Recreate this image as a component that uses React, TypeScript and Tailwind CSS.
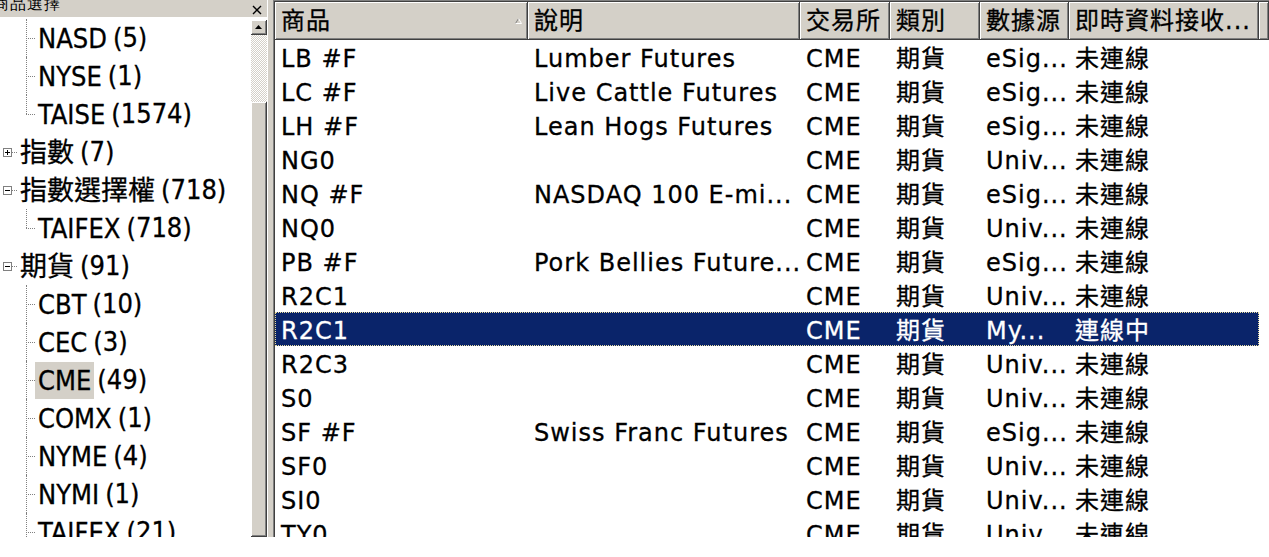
import React from 'react';

type TreeRow = {
  level: 1 | 2;
  label: string;
  count: string;
  box?: '+' | '-';
  last?: boolean;
  selected?: boolean;
};

const treeRows: TreeRow[] = [
  { level: 2, label: 'NASD', count: '(5)' },
  { level: 2, label: 'NYSE', count: '(1)' },
  { level: 2, label: 'TAISE', count: '(1574)', last: true },
  { level: 1, label: '指數', count: '(7)', box: '+' },
  { level: 1, label: '指數選擇權', count: '(718)', box: '-' },
  { level: 2, label: 'TAIFEX', count: '(718)', last: true },
  { level: 1, label: '期貨', count: '(91)', box: '-' },
  { level: 2, label: 'CBT', count: '(10)' },
  { level: 2, label: 'CEC', count: '(3)' },
  { level: 2, label: 'CME', count: '(49)', selected: true },
  { level: 2, label: 'COMX', count: '(1)' },
  { level: 2, label: 'NYME', count: '(4)' },
  { level: 2, label: 'NYMI', count: '(1)' },
  { level: 2, label: 'TAIFEX', count: '(21)' },
];

// column widths of the list view
const colClass = ['w-[253px]', 'w-[272px]', 'w-[90px]', 'w-[90px]', 'w-[89px]', 'w-[190px]'];
const headers = ['商品', '說明', '交易所', '類別', '數據源', '即時資料接收...'];

type Quote = { sym: string; desc: string; src: string; status: string; selected?: boolean };

const quotes: Quote[] = [
  { sym: 'LB #F', desc: 'Lumber Futures', src: 'eSig...', status: '未連線' },
  { sym: 'LC #F', desc: 'Live Cattle Futures', src: 'eSig...', status: '未連線' },
  { sym: 'LH #F', desc: 'Lean Hogs Futures', src: 'eSig...', status: '未連線' },
  { sym: 'NG0', desc: '', src: 'Univ...', status: '未連線' },
  { sym: 'NQ #F', desc: 'NASDAQ 100 E-mi...', src: 'eSig...', status: '未連線' },
  { sym: 'NQ0', desc: '', src: 'Univ...', status: '未連線' },
  { sym: 'PB #F', desc: 'Pork Bellies Future...', src: 'eSig...', status: '未連線' },
  { sym: 'R2C1', desc: '', src: 'Univ...', status: '未連線' },
  { sym: 'R2C1', desc: '', src: 'My...', status: '連線中', selected: true },
  { sym: 'R2C3', desc: '', src: 'Univ...', status: '未連線' },
  { sym: 'S0', desc: '', src: 'Univ...', status: '未連線' },
  { sym: 'SF #F', desc: 'Swiss Franc Futures', src: 'eSig...', status: '未連線' },
  { sym: 'SF0', desc: '', src: 'Univ...', status: '未連線' },
  { sym: 'SI0', desc: '', src: 'Univ...', status: '未連線' },
  { sym: 'TY0', desc: '', src: 'Univ...', status: '未連線' },
];

const ExpandBox: React.FC<{ sign: '+' | '-' }> = ({ sign }) => (
  <svg width="9" height="9" viewBox="0 0 9 9" className="absolute left-[3px] top-[15px]">
    <rect x="0.5" y="0.5" width="8" height="8" fill="#fff" stroke="#808080" />
    <line x1="2" y1="4.5" x2="7" y2="4.5" stroke="#000" />
    {sign === '+' && <line x1="4.5" y1="2" x2="4.5" y2="7" stroke="#000" />}
  </svg>
);

const TreeItem: React.FC<{ row: TreeRow }> = ({ row }) => (
  <div className="flex h-[38px] items-center whitespace-nowrap">
    {row.level === 1 ? (
      <div className="relative h-full w-[17px] shrink-0">
        <span className="absolute left-[12px] top-[19px] w-[5px] border-t border-dotted border-[#808080]" />
        <ExpandBox sign={row.box ?? '+'} />
      </div>
    ) : (
      <div className="relative h-full w-[35px] shrink-0">
        <span
          className={`absolute left-[26px] top-0 border-l border-dotted border-[#808080] ${
            row.last ? 'h-[19px]' : 'h-full'
          }`}
        />
        <span className="absolute left-[26px] top-[19px] w-[9px] border-t border-dotted border-[#808080]" />
      </div>
    )}
    <span className={`px-[3px] leading-[37px] ${row.selected ? 'bg-[#d4d0c8]' : ''}`}>{row.label}</span>
    <span className="ml-[3px]">{row.count}</span>
  </div>
);

const raised = 'bg-[#d4d0c8] border-r border-b border-[#404040] shadow-[inset_1px_1px_0_#fff,inset_-1px_-1px_0_#808080]';

const LeftPanel: React.FC = () => (
  <div className="flex w-[267px] shrink-0 flex-col">
    {/* title bar, its caption is scrolled mostly out of view */}
    <div className="relative h-[17px] shrink-0 overflow-hidden bg-[#d4d0c8]">
      <span className="-ml-[7px] -mt-[9px] block text-[16px] leading-[24px] tracking-[1px] text-black">
        商品選擇
      </span>
      <svg width="10" height="10" viewBox="0 0 10 10" className="absolute right-[5px] top-[5px]">
        <path d="M1 1 L9 9 M9 1 L1 9" stroke="#000" strokeWidth="1.4" />
      </svg>
    </div>
    <div className="flex min-h-0 flex-1">
      <div className="min-w-0 flex-1 overflow-hidden bg-white pt-[2px] font-['DejaVu_Sans_Condensed','DejaVu_Sans','Noto_Sans_CJK_TC',sans-serif] text-[27px] text-black [-webkit-text-stroke:0.3px_currentColor]">
        {treeRows.map((r, i) => (
          <TreeItem key={i} row={r} />
        ))}
      </div>
      {/* vertical scroll bar */}
      <div className="flex w-[16px] shrink-0 flex-col bg-white pt-[3px]">
        <div className={`flex h-[15px] shrink-0 items-center justify-center ${raised}`}>
          <svg width="7" height="4" viewBox="0 0 7 4">
            <path d="M3.5 0 L7 4 L0 4 Z" fill="#000" />
          </svg>
        </div>
        <div className="h-[67px] shrink-0 bg-[repeating-conic-gradient(#d4d0c8_0_25%,#ffffff_0_50%)] bg-[length:2px_2px]" />
        <div className={`flex-1 ${raised}`} />
      </div>
    </div>
  </div>
);

const RightPanel: React.FC = () => (
  <div className="min-w-0 flex-1 border-l border-t border-[#808080]">
    <div className="h-full border-l border-t border-[#404040] bg-white font-['DejaVu_Sans','Noto_Sans_CJK_TC',sans-serif] text-[24px] tracking-[1px] text-black [-webkit-text-stroke:0.3px_currentColor]">
      <div className="flex h-[38px]">
        {headers.map((h, i) => (
          <div key={h} className={`${colClass[i]} flex shrink-0 items-center overflow-hidden whitespace-nowrap pl-[6px] pr-[5px] ${raised}`}>
            <span>{h}</span>
            {i === 0 && (
              <svg width="7" height="6" viewBox="0 0 7 6" className="ml-auto">
                <path d="M0.5 5.5 L3.5 0.5" stroke="#808080" />
                <path d="M3.5 0.5 L6.5 5.5 L0.5 5.5" stroke="#ffffff" fill="none" />
              </svg>
            )}
          </div>
        ))}
        <div className={`flex-1 ${raised}`} />
      </div>
      {quotes.map((q, i) => (
        <div
          key={i}
          className={`flex h-[34px] w-[984px] items-center whitespace-nowrap ${
            q.selected ? 'bg-[#0a246a] text-white outline-1 -outline-offset-1 outline-dotted outline-[#e8dca0]' : ''
          }`}
        >
          {[q.sym, q.desc, 'CME', '期貨', q.src, q.status].map((c, j) => (
            <div key={j} className={`${colClass[j]} h-[34px] shrink-0 overflow-hidden pl-[6px] pt-[4px] leading-[30px]`}>
              {c}
            </div>
          ))}
        </div>
      ))}
    </div>
  </div>
);

export default function App() {
  return (
    <div className="h-[557px] w-[1269px] overflow-hidden bg-white">
      <div className="flex h-[537px] overflow-hidden">
        <LeftPanel />
        {/* splitter */}
        <div className="w-[6px] shrink-0 border-l border-white bg-[#d4d0c8]" />
        <RightPanel />
      </div>
    </div>
  );
}
